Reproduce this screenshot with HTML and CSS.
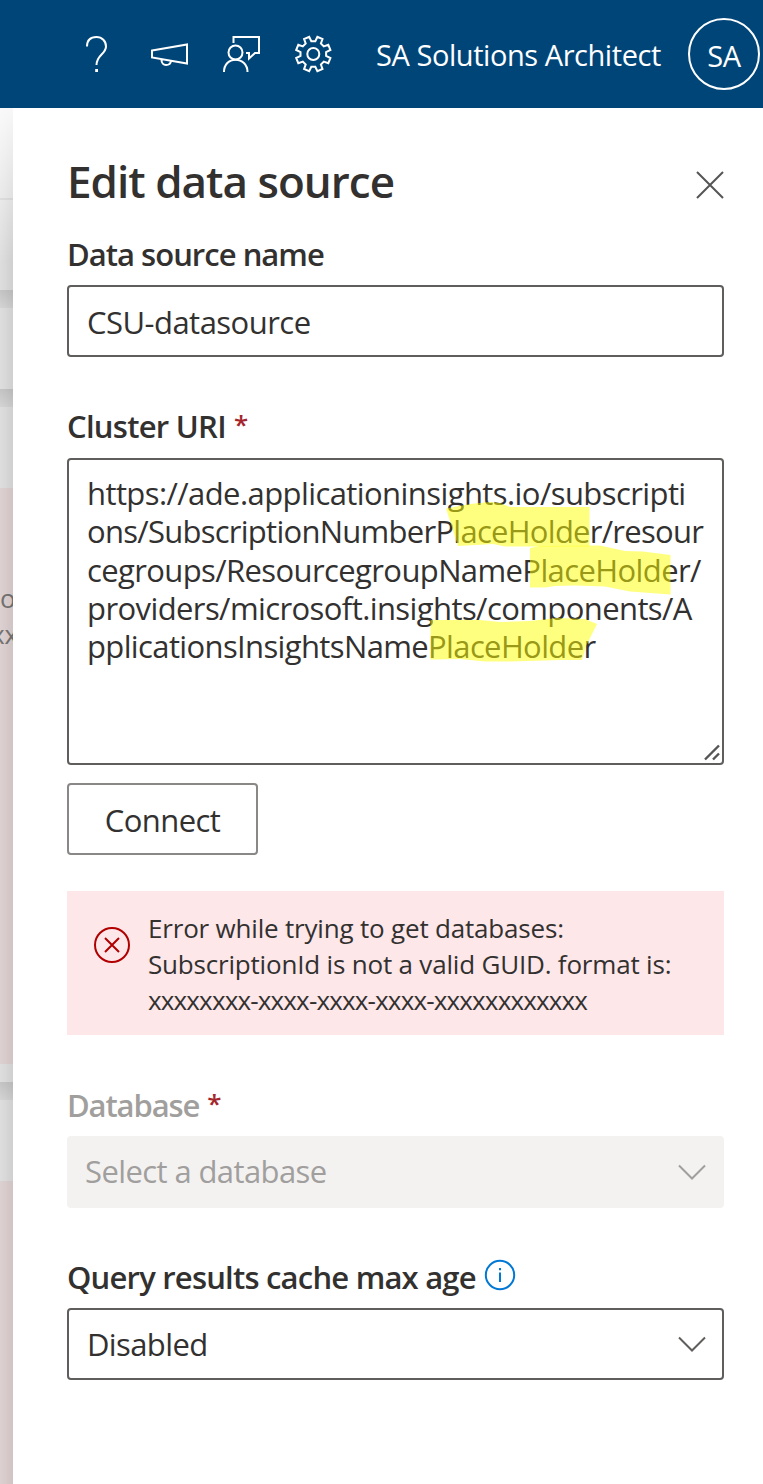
FILE: index.html
```
<!DOCTYPE html>
<html lang="en">
<head>
<meta charset="utf-8">
<title>Edit data source</title>
<link rel="stylesheet" href="styles.css">
</head>
<body>
<header class="topbar">
  <svg class="tools" width="270" height="108" viewBox="0 0 270 108" fill="none" stroke="#fff" stroke-width="2">
    <path d="M17 46.500C17 40 21 37 26.500 37S36 41 36 46.500C36 54 26.500 55 26.500 65"/>
    <path d="M25.200 70.500h2.800" stroke-width="3"/>
    <path d="M82 50.500L117 44.500V63.500L82 57.500ZM91.500 60c0 3 2 5 4.500 5s4.700-1.500 5-4"/>
    <circle cx="165.500" cy="52.500" r="7"/>
    <path d="M154 72c0-7.500 5-12.300 11.500-12.300S177.500 64.500 177.500 72M163.500 43v-6H189v16h-4l-6 5.500V53h-3"/>
    <g transform="translate(243.300 54)">
      <circle r="6"/>
      <path d="M2 -12.800L4.100 -17.100L9.200 -15L7.600 -10.500L10.500 -7.600L15 -9.200L17.100 -4.100L12.800 -2V2L17.100 4.100L15 9.200L10.500 7.600L7.600 10.500L9.200 15L4.100 17.100L2 12.800H-2L-4.100 17.100L-9.200 15L-7.600 10.500L-10.500 7.600L-15 9.200L-17.100 4.100L-12.800 2V-2L-17.100 -4.100L-15 -9.200L-10.500 -7.600L-7.600 -10.500L-9.200 -15L-4.100 -17.100L-2 -12.800Z"/>
    </g>
  </svg>
  <span class="user">SA Solutions Architect</span>
  <span class="avatar">SA</span>
</header>
<div class="page">
  <div class="backdrop">
    <div class="sheet sheet-header"></div>
    <div class="sheet sheet-title"></div>
    <div class="gap"></div>
    <div class="sheet sheet-row"></div>
    <div class="gap"></div>
    <div class="sheet sheet-row"></div>
    <div class="alert"><span class="peek">o</span><span class="peek peek-x">xx</span></div>
    <div class="sheet sheet-foot"></div>
    <div class="gap"></div>
    <div class="sheet sheet-row"></div>
    <div class="alert-rest"></div>
  </div>
  <main class="panel">
    <div class="heading">
      <h1 class="title">Edit data source</h1>
      <svg width="28" height="28" viewBox="0 0 28 28" fill="none" stroke="#555" stroke-width="2"><path d="M1 1L27 27M27 1L1 27"/></svg>
    </div>
    <label class="label label-name">Data source name</label>
    <div class="field"><span class="csu">CSU-datasource</span></div>

    <label class="label label-uri"><span class="cluster">Cluster URI</span><span class="star">*</span></label>
    <div class="uri">
      <div class="l1">https://ade.applicationinsights.io/subscripti</div>
      <div class="l2">ons/SubscriptionNumberPlaceHolder/resour</div>
      <div class="l3">cegroups/ResourcegroupNamePlaceHolder/</div>
      <div class="l4">providers/microsoft.insights/components/A</div>
      <div class="l5">pplicationsInsightsNamePlaceHolder</div>
      <svg class="marker" width="657" height="307" viewBox="67 458 657 307" fill="#ff0" fill-opacity=".5">
        <path d="M446 508.500L470 504L490 502L500 503L510 507H589.500V546.500H505L493 544L458 546Z"/>
        <path d="M530 548L540 546L600 545.500L625 551L643 551.500L670.500 555V594.500L630 591.500L605 586.500L575 585.500L555 586L545 587.500H530Z"/>
        <path d="M430.500 620H480L500 622L530 621L557 618L585 619L597 624L586 646L582 660H560L510 661.500H485L460 659L430.500 659.500Z"/>
      </svg>
      <svg class="grip" width="18" height="18" viewBox="0 0 18 18" fill="none" stroke="#555" stroke-width="2.400"><path d="M2 15.500L16 1.500M10 15.500L16 9.500"/></svg>
    </div>
    <button class="connect">Connect</button>

    <div class="error">
      <svg width="38" height="38" viewBox="0 0 38 38" fill="none" stroke="#b00000" stroke-width="2"><circle cx="19" cy="19" r="17"/><path d="M12 12L26 26M26 12L12 26"/></svg>
      <div class="error-text">
        <div>Error while trying to get databases:</div>
        <div>SubscriptionId is not a valid GUID. format is:</div>
        <div class="guid">xxxxxxxx-xxxx-xxxx-xxxx-xxxxxxxxxxxx</div>
      </div>
    </div>

    <label class="label label-db"><span class="database">Database</span><span class="star">*</span></label>
    <div class="field field-off"><span class="select">Select a database</span>
      <svg width="28" height="16" viewBox="0 0 28 16" fill="none" stroke="#a19f9d" stroke-width="2"><path d="M1 1.500L14 14.500L27 1.500"/></svg>
    </div>

    <label class="label label-age"><span>Query results cache max age</span>
      <svg width="32" height="32" viewBox="0 0 32 32" fill="none" stroke="#0078d4" stroke-width="2"><circle cx="16" cy="16" r="14.200"/><path d="M16 13.500V23M16 9v2.200"/></svg>
    </label>
    <div class="field"><span class="disabled">Disabled</span>
      <svg width="28" height="16" viewBox="0 0 28 16" fill="none" stroke="#605e5c" stroke-width="2"><path d="M1 1.500L14 14.500L27 1.500"/></svg>
    </div>
  </main>
</div>
</body>
</html>
```
FILE: styles.css
```
* { box-sizing: border-box; }
body {
  margin: 0;
  height: 1484px;
  overflow: hidden;
  font-family: "Open Sans", "Noto Sans", sans-serif;
  font-size: 31px;
  color: #323130;
  white-space: nowrap;
}
svg { display: block; flex: none; }

/* Top bar */
.topbar {
  height: 108px;
  padding-left: 70px;
  background: #004578;
  color: #fff;
  display: flex;
  align-items: center;
  font-size: 29px;
}
.user { width: 312px; margin-left: 36px; letter-spacing: -.44px; }
.avatar {
  width: 72px;
  height: 72px;
  flex: none;
  border: 2px solid #fff;
  border-radius: 50%;
  display: flex;
  align-items: center;
  justify-content: center;
  padding-top: 2px;
  letter-spacing: -.4px;
}

/* Dimmed page behind the panel */
.page { display: flex; height: 1376px; }
.backdrop { width: 13px; flex: none; overflow: hidden; position: relative; }
.backdrop::after {
  content: "";
  position: absolute;
  inset: 0;
  background: linear-gradient(to right, rgba(0,0,0,.12), rgba(0,0,0,.18));
  -webkit-mask-image: linear-gradient(165deg, rgba(0,0,0,.1), #000 150px);
  mask-image: linear-gradient(165deg, rgba(0,0,0,.1), #000 150px);
}
.sheet { background: #fdfdfd; }
.sheet-header { height: 92px; border-bottom: 2px solid #efefef; }
.sheet-title { height: 90px; }
.sheet-row { height: 81px; }
.sheet-foot { height: 18px; }
.gap { height: 18px; background: linear-gradient(#e0e0e0, #f2f2f2); }
.alert { height: 576px; background: #fdeeee; padding-top: 92px; font-size: 26px; line-height: 36px; color: #858381; }
.peek { display: block; }
.peek-x { margin-left: -9px; }
.alert-rest { height: 303px; background: #fdeeee; }

/* Panel */
.panel { flex: 1; background: #fff; padding: 44px 39px 0 54px; }
.heading { height: 62px; display: flex; align-items: center; justify-content: space-between; }
.heading svg { margin-top: 4px; }
.title { margin: -4px 0 0; font-size: 44px; font-weight: 600; line-height: 60px; letter-spacing: -.98px; }
.label { display: flex; height: 60px; line-height: 58px; font-weight: 600; }
.label-name { height: 71px; padding-top: 11px; letter-spacing: -.98px; }
.star { color: #a4262c; margin-left: 8px; font-size: 26px; line-height: 55px; }
.label-uri { margin-top: 40px; height: 61px; }
.cluster { letter-spacing: -.73px; }
.field {
  height: 72px;
  border: 2px solid #605e5c;
  border-radius: 4px;
  padding: 2px 16px 0 18px;
  display: flex;
  align-items: center;
  justify-content: space-between;
}
.field svg { margin-top: -3px; }
.csu { letter-spacing: -.53px; }
.uri {
  position: relative;
  height: 307px;
  border: 2px solid #605e5c;
  border-radius: 4px;
  padding: 14px 0 0 18px;
  line-height: 38.300px;
}
.l1 { letter-spacing: -.58px; }
.l2 { letter-spacing: -.73px; }
.l3 { letter-spacing: -.61px; }
.l4 { letter-spacing: -.59px; }
.l5 { letter-spacing: -.63px; }
.marker { position: absolute; left: -2px; top: -2px; }
.grip { position: absolute; right: 1px; bottom: 1px; }
.connect {
  display: block;
  width: 191px;
  height: 72px;
  margin-top: 18px;
  padding: 2px 0 0;
  border: 2px solid #8a8886;
  border-radius: 4px;
  background: #fff;
  color: #323130;
  font: inherit;
  letter-spacing: -.55px;
}
.error {
  height: 144px;
  margin-top: 36px;
  padding: 19px 26px 0;
  background: #fde7e9;
  display: flex;
  font-size: 26px;
  line-height: 36px;
  letter-spacing: -.19px;
}
.error svg { margin-top: 16px; }
.error-text { margin-left: 17px; }
.guid { letter-spacing: -.83px; }
.label-db { margin-top: 41px; color: #a19f9d; }
.database { letter-spacing: -1.120px; }
.field-off { background: #f3f2f1; border-color: #f3f2f1; color: #a19f9d; padding: 0 16px; }
.field-off svg { margin-top: -1px; }
.select { letter-spacing: -.6px; margin-top: -2px; }
.label-age { margin-top: 40px; letter-spacing: -.79px; }
.label-age svg { margin: 11px 0 0 8px; }
.disabled { letter-spacing: -.62px; margin-top: -2px; }
```
